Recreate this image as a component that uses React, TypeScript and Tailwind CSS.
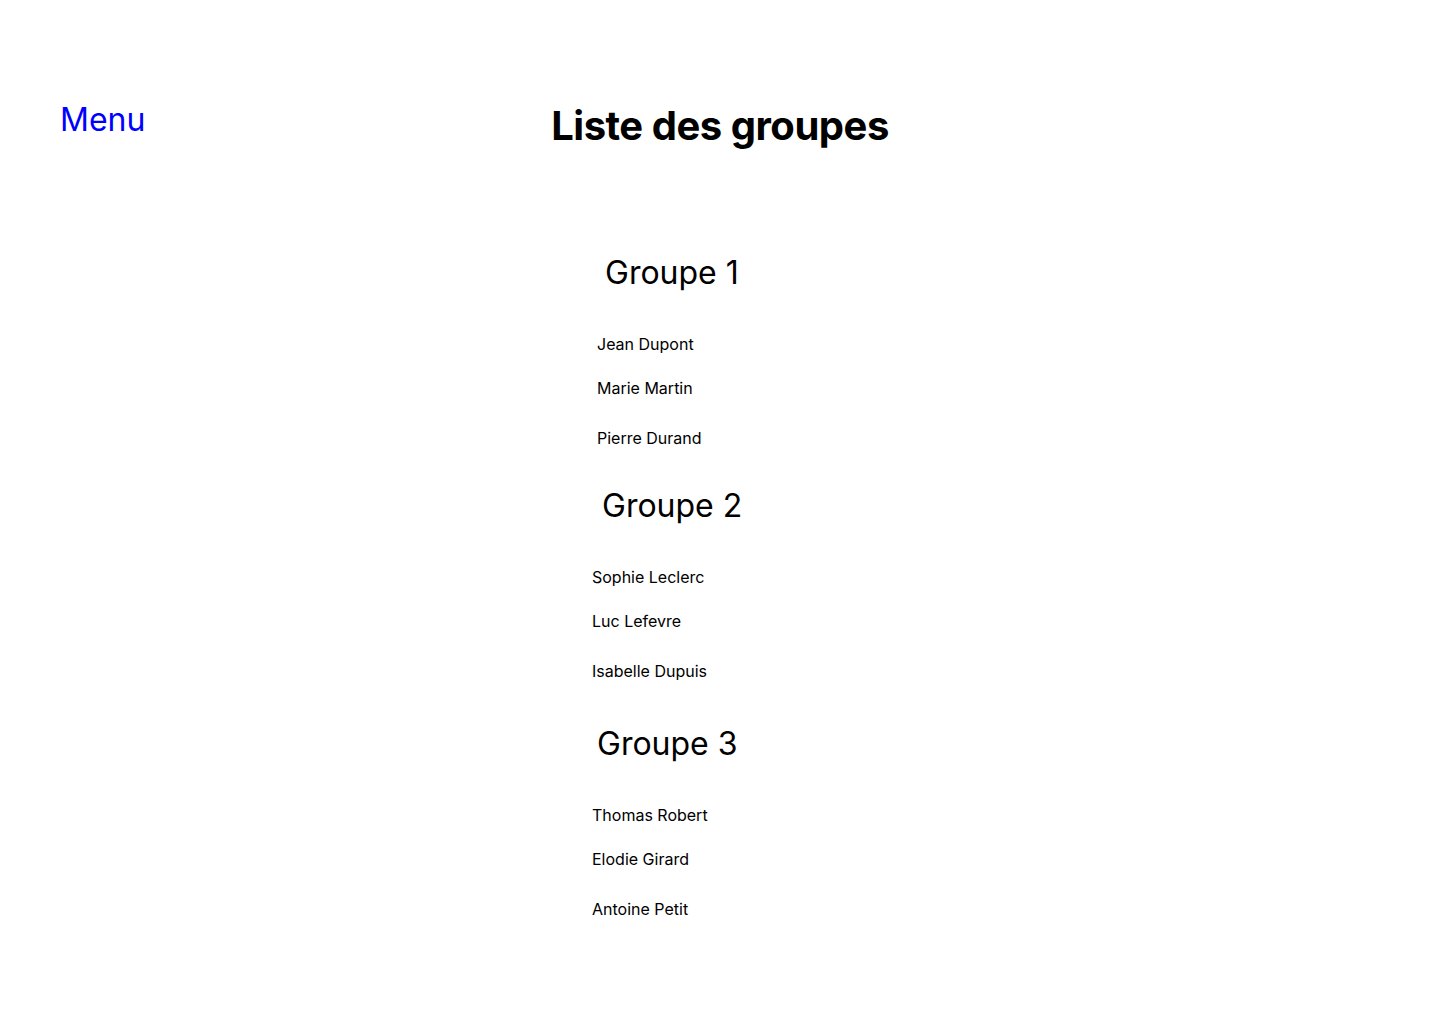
const groups = [
  { name: 'Groupe 1', head: 'ml-[13px]', list: 'ml-[5px]', top: 'mt-0', members: ['Jean Dupont', 'Marie Martin', 'Pierre Durand'] },
  { name: 'Groupe 2', head: 'ml-[10px]', list: 'ml-0', top: 'mt-[36px]', members: ['Sophie Leclerc', 'Luc Lefevre', 'Isabelle Dupuis'] },
  { name: 'Groupe 3', head: 'ml-[5px]', list: 'ml-0', top: 'mt-[41px]', members: ['Thomas Robert', 'Elodie Girard', 'Antoine Petit'] },
];

export default function App() {
  return (
    <div className="min-h-[1024px] w-full bg-white text-black" style={{ fontFamily: 'Inter, "Noto Sans", sans-serif' }}>
      <header className="grid grid-cols-[1fr_auto_1fr] items-start pt-[98px]">
        <a href="#" className="pl-[60px] pt-[2px] text-[32px] leading-[40px] text-[#0000ff]">Menu</a>
        <h1 className="pt-[2px] text-[40px] leading-[52px] font-bold tracking-[-0.012em]">Liste des groupes</h1>
        <div />
      </header>

      <main className="ml-[592px] mt-[101px] pb-16">
        {groups.map((g) => (
          <section key={g.name} className={g.top}>
            <h2 className={`${g.head} text-[32px] leading-[40px] font-normal`}>{g.name}</h2>
            <ul className={`${g.list} mt-[39px] text-[16px] leading-[24px]`}>
              <li>{g.members[0]}</li>
              <li className="mt-[20px]">{g.members[1]}</li>
              <li className="mt-[26px]">{g.members[2]}</li>
            </ul>
          </section>
        ))}
      </main>
    </div>
  );
}
